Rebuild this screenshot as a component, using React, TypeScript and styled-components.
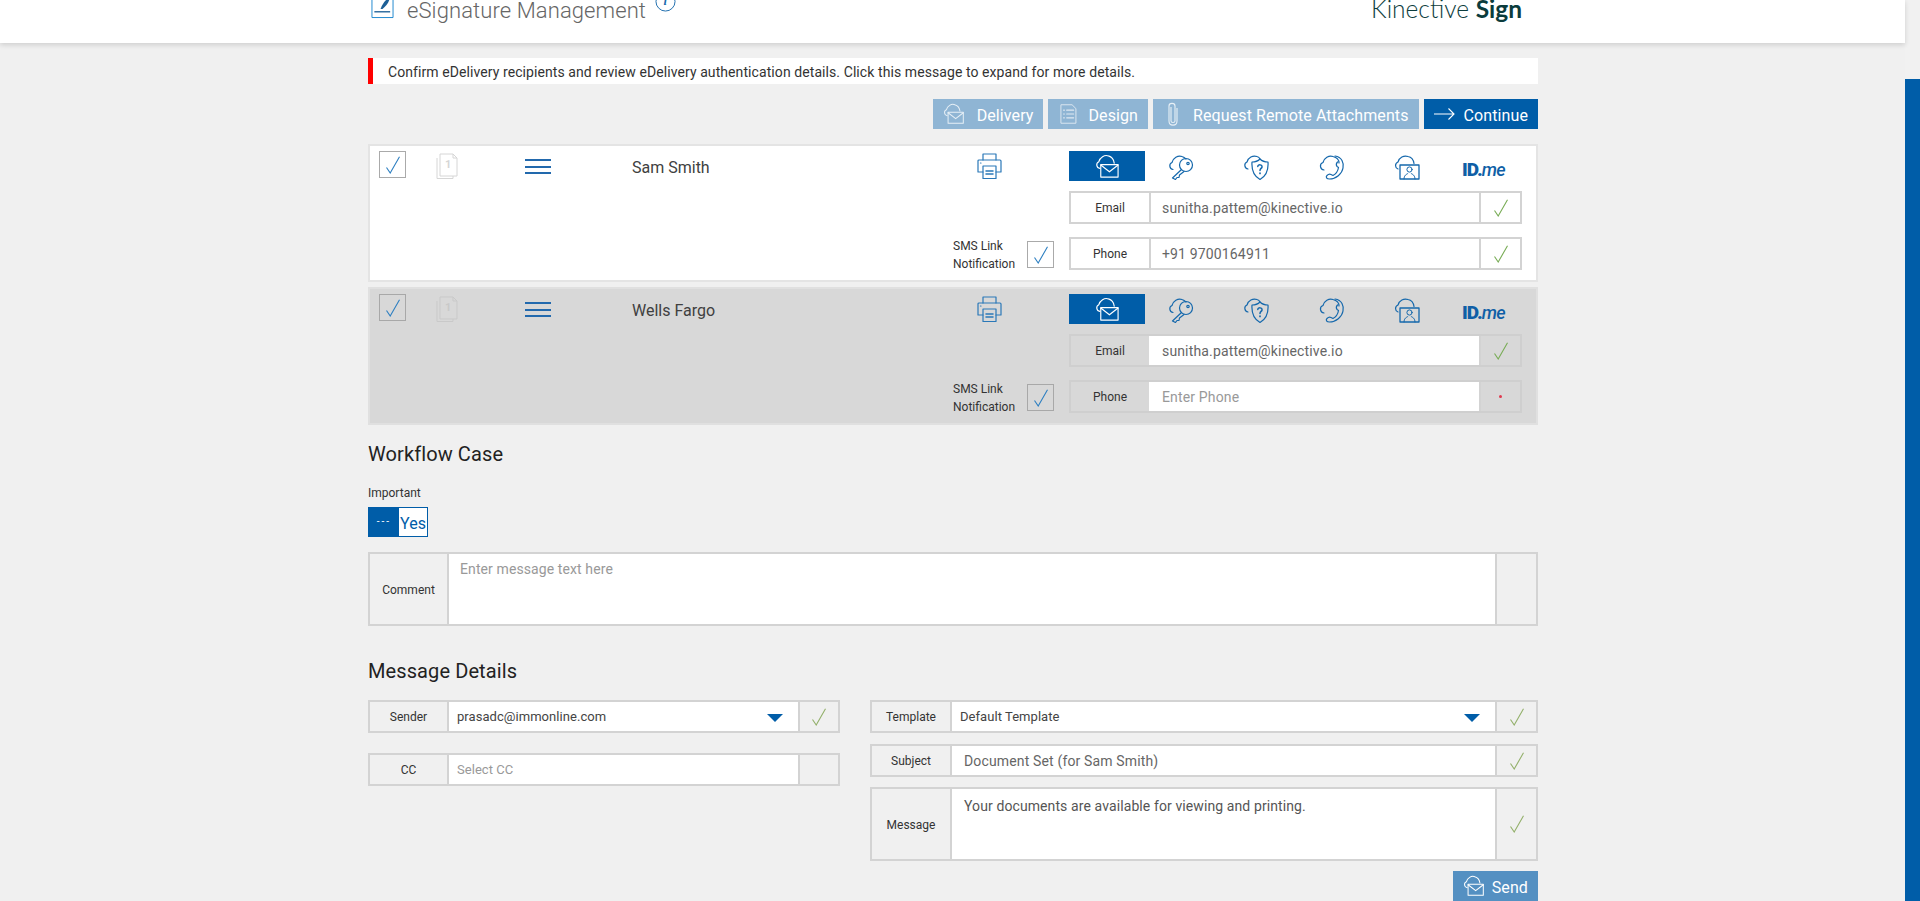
import React from "react";
import styled, { createGlobalStyle } from "styled-components";

const BLUE = "#005da8";

const Global = createGlobalStyle`
  html, body { margin: 0; padding: 0; height: 901px; overflow: hidden; background: #f0f0f0; }
  body { font-family: Roboto, "Liberation Sans", sans-serif; color: #333; }
  * { box-sizing: border-box; }
`;

const Shell = styled.div`display: flex; width: 1920px; height: 901px; overflow: hidden;`;
const Main = styled.div`width: 1905px; flex: none; display: flex; flex-direction: column;`;
const ScrollTrack = styled.div`width: 15px; flex: none; padding-top: 79px; background: #f1f1f1; display: flex;`;
const ScrollThumb = styled.div`flex: 1; background: ${BLUE};`;

const Header = styled.header`
  height: 43px; flex: none; background: #fff; box-shadow: 0 2px 5px rgba(0,0,0,.14);
  overflow: hidden; padding: 0 16px 17px 371px; display: flex; align-items: flex-end; position: relative; z-index: 1;
`;
const HeaderIcon = styled.svg`width: 23px; height: 24px; flex: none; margin-bottom: 7px; margin-right: 13px;`;
const Title = styled.h1`margin: 0; font-size: 22px; line-height: 30px; font-weight: 300; color: #666; letter-spacing: .1px;`;
const InfoIcon = styled.svg`width: 21px; height: 21px; flex: none; margin: 0 0 14px 9px;`;
const Logo = styled.div`
  margin-left: auto; font-family: Lato, sans-serif; font-size: 24.5px; line-height: 30px; color: #0b3c3c; font-weight: 300;
  padding-right: 367px; margin-bottom: 2px;
  b { font-weight: 700; }
`;

const Page = styled.main`width: 1170px; margin-left: 368px; padding-top: 15px;`;

const Alert = styled.div`
  height: 26px; background: #fff; border-left: 5px solid #f00; padding-left: 15px;
  font-size: 14px; line-height: 28px; color: #333; letter-spacing: .08px;
`;
const Toolbar = styled.div`display: flex; justify-content: flex-end; gap: 5px; margin: 15px 0;`;
const ActionBtn = styled.button<{ $tone?: "muted" | "solid" | "mid"; $gap?: number; $left?: number }>`
  height: 30px; border: 0; padding: 0 10px 0 ${(p) => p.$left ?? 10}px; display: inline-flex; align-items: center; gap: ${(p) => p.$gap ?? 12}px;
  font: 400 16px/30px Roboto, sans-serif; color: #fff; letter-spacing: .1px;
  background: ${(p) => (p.$tone === "solid" ? BLUE : p.$tone === "mid" ? "#5490c2" : "#8fb5d4")};
  svg { flex: none; }
`;
const BtnText = styled.span`padding-top: 4px;`;

const Card = styled.section<{ $muted?: boolean }>`
  height: 138px; border: 2px solid ${(p) => (p.$muted ? "#e0e0e0" : "#e4e4e4")};
  background: ${(p) => (p.$muted ? "#d8d8d8" : "#fff")};
  padding: 5px 14px 0 9px; display: flex; margin-bottom: 5px;
`;
const CheckBox = styled.div<{ $muted?: boolean }>`
  width: 27px; height: 27px; border: 1px solid ${(p) => (p.$muted ? "#a8a8a8" : "#aaa")}; flex: none;
  display: flex; align-items: center; justify-content: center; color: #2d7fc1;
`;
const DocSlot = styled.div`width: 22px; margin: 2px 67px 0 30px; flex: none;`;
const Burger = styled.div`
  width: 26px; height: 15px; margin: 8px 81px 0 0; flex: none; border-top: 2px solid #2269ad; border-bottom: 2px solid #2269ad; position: relative;
  &::after { content: ""; position: absolute; left: 0; right: 0; top: 4.5px; height: 2px; background: #2269ad; }
`;
const Name = styled.div`font-size: 16px; line-height: 20px; margin-top: 7px; color: #404040; flex: 1;`;
const Right = styled.div`
  width: 569px; flex: none; display: grid; grid-template-columns: 116px 1fr; grid-template-rows: 30px 43px 46px;
`;
const PrinterSlot = styled.div`padding: 2px 0 0 23px;`;
const Tabs = styled.div`display: flex; height: 30px;`;
const Tab = styled.div<{ $active?: boolean }>`
  width: 76px; flex: none; height: 30px; display: flex; align-items: center; justify-content: center;
  background: ${(p) => (p.$active ? BLUE : "transparent")};
  padding: ${(p) => (p.$active ? "0" : "2px 4px 0 0")};
  margin-right: -.4px;
`;
const IdMe = styled.div`
  font-size: 19px; font-weight: 900; color: #0f5fa6; letter-spacing: -1px; line-height: 30px; padding: 4px 0 0 15px;
  i { font-weight: 500; font-size: 18px; letter-spacing: -.7px; }
`;
const SpacerCell = styled.div``;
const SmsCell = styled.div`height: 33px; align-self: end; display: flex; align-items: center; justify-content: space-between; padding: 2px 15px 0 0;`;
const SmsText = styled.div`font-size: 12px; line-height: 18px; color: #333;`;

const LINE = "#d3d3d3";

const Field = styled.div<{ $muted?: boolean; $page?: boolean }>`
  display: flex; height: 33px; align-self: end; border: 2px solid ${(p) => (p.$muted ? "#cfcfcf" : LINE)};
  background: ${(p) => (p.$muted ? "#d8d8d8" : p.$page ? "#f0f0f0" : "#fff")};
`;
const FieldLabel = styled.div<{ $width?: number }>`
  width: ${(p) => p.$width ?? 78}px; flex: none; display: flex; align-items: center; justify-content: center;
  font-size: 12px; color: #333; padding-top: 1px;
`;
const FieldValue = styled.div<{ $placeholder?: boolean; $size?: number; $pad?: number; $dark?: boolean; $muted?: boolean }>`
  flex: 1; min-width: 0; background: #fff; border-left: 2px solid ${(p) => (p.$muted ? "#fff" : LINE)};
  padding: 0 10px 0 ${(p) => p.$pad ?? 11}px; display: flex; align-items: center; justify-content: space-between;
  font-size: ${(p) => p.$size ?? 14}px; color: ${(p) => (p.$placeholder ? "#999" : p.$dark ? "#444" : "#666")};
  line-height: 1; letter-spacing: ${(p) => (p.$size ? ".05px" : ".15px")};
`;
const FieldSide = styled.div<{ $width?: number; $soft?: boolean }>`
  width: ${(p) => p.$width ?? 41}px; flex: none; border-left: 2px solid ${LINE}; display: flex; align-items: center; justify-content: center;
  color: ${(p) => (p.$soft ? "#93b06b" : "#78ac55")};
`;
const RedDot = styled.span`width: 3px; height: 3px; border-radius: 50%; background: #e0394f;`;

const Heading = styled.h2<{ $top: number }>`
  margin: ${(p) => p.$top}px 0 0; font-size: 20px; line-height: 24px; font-weight: 400; color: #222; letter-spacing: .1px;
`;
const SmallLabel = styled.div`font-size: 12px; line-height: 16px; color: #333; margin-top: 19px;`;
const Toggle = styled.div`display: flex; width: 60px; height: 30px; border: 1px solid ${BLUE}; margin: 6px 0 15px; background: #fff;`;
const ToggleOn = styled.div`width: 30px; background: ${BLUE}; color: #fff; font-size: 10px; line-height: 28px; text-align: center; letter-spacing: 2px;`;
const ToggleOff = styled.div`flex: 1; color: ${BLUE}; font-size: 16px; line-height: 32px; text-align: center;`;

const TextBlock = styled.div<{ $h: number }>`
  display: flex; height: ${(p) => p.$h}px; border: 2px solid ${LINE}; background: #f0f0f0;
`;
const TextArea = styled.div<{ $placeholder?: boolean; $pad?: number }>`
  flex: 1; background: #fff; border-left: 2px solid ${LINE};
  padding: ${(p) => (p.$placeholder ? 5 : 7)}px 10px 0 ${(p) => p.$pad ?? 11}px;
  font-size: 14px; line-height: 20px; letter-spacing: .1px; color: ${(p) => (p.$placeholder ? "#999" : "#555")};
`;
const Columns = styled.div`display: flex; justify-content: space-between; margin-top: 17px;`;
const Col = styled.div<{ $width: number }>`width: ${(p) => p.$width}px; flex: none;`;
const Gap = styled.div<{ $h: number }>`height: ${(p) => p.$h}px;`;
const SendRow = styled.div`display: flex; justify-content: flex-end; margin-top: 10px;`;
const Arrow = styled.span`width: 0; height: 0; border-left: 8px solid transparent; border-right: 8px solid transparent; border-top: 8px solid ${BLUE}; margin: 2px 5px 0 0;`;

const Tick = ({ size = 18 }: { size?: number }) => (
  <svg width={size} height={size} viewBox="0 0 18 18" fill="none" stroke="currentColor" strokeWidth="1.1">
    <path d="M2.5 11.5 L6.2 17 L15.5 0.8" />
  </svg>
);

const Ico = ({ color = "#1568ac", w = 26, h = 26, children }: { color?: string; w?: number; h?: number; children: React.ReactNode }) => (
  <svg width={w} height={h} viewBox="0 0 26 26" fill="none" stroke={color} strokeWidth="1.2" strokeLinecap="round" strokeLinejoin="round">
    {children}
  </svg>
);
const MailIcon = ({ color, w = 25, h = 25 }: { color?: string; w?: number; h?: number }) => (
  <Ico color={color} w={w} h={h}>
    <path d="M5 15 C1.5 14.5 .5 9.5 4 8 C5 3.5 10 .5 14 2 C17.5 3 19.5 6 20 9.5" />
    <rect x="6" y="11" width="18" height="13" />
    <path d="M6 11.5 L15 18.5 L24 11.5" />
  </Ico>
);
const KeyIcon = () => (
  <Ico>
    <path d="M5 15.5 C1.5 15 .5 10 4 8.5 C5 4 10 1 14 2.5 C15.5 3 17 4 18 5" />
    <circle cx="18" cy="11" r="6.5" />
    <circle cx="20" cy="9.5" r="1.2" />
    <path d="M13.5 15.5 L4.5 24 L7.5 25.5 L9 23.5 L11 23.5 L11.5 21 L16 17.5" />
  </Ico>
);
const ShieldIcon = () => (
  <Ico>
    <path d="M5 15 C1.5 14.5 .5 9.5 4 8 C5 3.5 10 1 14 2.5 C15.5 3 16.5 4 17 5" />
    <path d="M9 8 C12 8 15 7 17 5 C19 7 22 8 25 8 C25.5 15 23.5 22 17 25.5 C10.5 22 8.5 15 9 8 Z" />
    <path d="M14.8 12.5 C15 10 19.5 10.5 19 13 C18.7 14.5 17 14.5 17 16.5" strokeWidth="1.5" />
    <path d="M17 19 L17 19.5" strokeWidth="1.7" />
  </Ico>
);
const PhoneIcon = () => (
  <Ico>
    <path d="M5 16 C1 15.5 0 10 4 8.5 C5 4 10 1 14 2.5 C18 3.5 20 6.5 20 9" />
    <path d="M16 2 C23 3 25 9 24 14 C23 20 17 25 10.5 25 C7.5 25 6.5 23 8 21.5 C9 20.5 11 20 12 20.5 L14 21.5 C17 20 19 16.5 19.5 13.5 L18 12.5 C17 11 17.5 9 18.5 8" />
  </Ico>
);
const ContactIcon = () => (
  <Ico>
    <path d="M4 15 C1 14 .5 9.5 4 8 C5 3.5 10 1 14 2.5 C17.5 3 19.5 6 20 9.5" />
    <rect x="6" y="11" width="19" height="14" strokeWidth="1.3" />
    <circle cx="15.5" cy="15.5" r="2.6" strokeWidth="1" />
    <path d="M10 25 C10 21 12.5 20.5 13.8 19.5 M21 25 C21 21 18.5 20.5 17.2 19.5" strokeWidth="1" />
  </Ico>
);
const PrinterIcon = () => (
  <Ico color="#2a78b8">
    <path d="M7 7 V1 H20 V7" />
    <path d="M7 19 H2 V8 C2 7.4 2.4 7 3 7 H24 C24.6 7 25 7.4 25 8 V19 H20" />
    <rect x="7" y="13" width="13" height="12.5" />
    <path d="M10 18 H17 M10 21 H17" strokeWidth="1.5" />
    <path d="M4.5 10 H5" />
  </Ico>
);
const DocIcon = ({ muted }: { muted?: boolean }) => {
  const c = muted ? "#c9c9c9" : "#d6d6d6";
  return (
    <svg width="22" height="26" viewBox="0 0 22 26" fill="none" stroke={c} strokeWidth="1">
      <path d="M1 5 V25.5 H17 V23" />
      <path d="M4 1 V23 H21 V5 L17 1 Z" />
      <path d="M17 1 V5 H21" />
      <text x="9" y="15" fontFamily="Roboto, sans-serif" fontSize="11" fontWeight="700" fill={c} stroke="none">1</text>
    </svg>
  );
};
const ListIcon = () => (
  <Ico color="#dfe9f2" w={20} h={26}>
    <path d="M3 1 H17 L22 6 V25 H3 Z" />
    <path d="M6 8 H7 M10 8 H19 M6 13 H7 M10 13 H19 M6 18 H7 M10 18 H19" strokeWidth="1.5" />
  </Ico>
);
const ClipIcon = () => (
  <svg width="10" height="24" viewBox="0 0 10 24" fill="none" stroke="#e8f0f6" strokeWidth="1.1">
    <path d="M3 5 V19 C3 21 7 21 7 19 V4 C7 .5 1 .5 1 4 V19 C1 24.5 9 24.5 9 19 V6" />
  </svg>
);
const ArrowIcon = () => (
  <svg width="21" height="14" viewBox="0 0 21 14" fill="none" stroke="#fff" strokeWidth="1.1">
    <path d="M0 7 H20 M14.5 1.5 L20 7 L14.5 12.5" />
  </svg>
);

const Recipient = ({ name, muted, phone }: { name: string; muted?: boolean; phone?: string }) => (
  <Card $muted={muted}>
    <CheckBox $muted={muted}><Tick /></CheckBox>
    <DocSlot><DocIcon muted={muted} /></DocSlot>
    <Burger />
    <Name>{name}</Name>
    <Right>
      <PrinterSlot><PrinterIcon /></PrinterSlot>
      <Tabs>
        <Tab $active><MailIcon color="#fff" /></Tab>
        <Tab><KeyIcon /></Tab>
        <Tab><ShieldIcon /></Tab>
        <Tab><PhoneIcon /></Tab>
        <Tab><ContactIcon /></Tab>
        <IdMe>ID.<i>me</i></IdMe>
      </Tabs>
      <SpacerCell />
      <Field $muted={muted}>
        <FieldLabel>Email</FieldLabel>
        <FieldValue $muted={muted}>sunitha.pattem@kinective.io</FieldValue>
        <FieldSide><Tick /></FieldSide>
      </Field>
      <SmsCell>
        <SmsText>SMS Link<br />Notification</SmsText>
        <CheckBox $muted={muted}><Tick /></CheckBox>
      </SmsCell>
      <Field $muted={muted}>
        <FieldLabel>Phone</FieldLabel>
        <FieldValue $muted={muted} $placeholder={!phone}>{phone ?? "Enter Phone"}</FieldValue>
        <FieldSide>{phone ? <Tick /> : <RedDot />}</FieldSide>
      </Field>
    </Right>
  </Card>
);

export default function App() {
  return (
    <Shell>
      <Global />
      <Main>
        <Header>
          <HeaderIcon viewBox="0 0 24 24" fill="none" stroke="#1c86cf" strokeWidth="1">
            <path d="M1 1 V23 H23 V1" />
            <path d="M10 14 C12 8 16 4 20 1 C19 7 16 11 12 14 Z" fill="#1c5f96" stroke="none" />
            <path d="M3.5 17 H20" stroke="#1c5f96" strokeWidth="1.4" />
          </HeaderIcon>
          <Title>eSignature Management</Title>
          <InfoIcon viewBox="0 0 22 22" fill="none" stroke="#1a6bac" strokeWidth="1">
            <circle cx="11" cy="11" r="10" />
            <text x="8.8" y="15" fontFamily="Liberation Serif, serif" fontStyle="italic" fontWeight="700" fontSize="13" fill="#1a6bac" stroke="none">i</text>
          </InfoIcon>
          <Logo>Kinective <b>Sign</b></Logo>
        </Header>
        <Page>
          <Alert>Confirm eDelivery recipients and review eDelivery authentication details. Click this message to expand for more details.</Alert>
          <Toolbar>
            <ActionBtn><MailIcon color="#e6eff6" w={22} h={22} /><BtnText>Delivery</BtnText></ActionBtn>
            <ActionBtn $left={11} $gap={9}><ListIcon /><BtnText>Design</BtnText></ActionBtn>
            <ActionBtn $left={15} $gap={15}><ClipIcon /><BtnText>Request Remote Attachments</BtnText></ActionBtn>
            <ActionBtn $tone="solid" $gap={9}><ArrowIcon /><BtnText>Continue</BtnText></ActionBtn>
          </Toolbar>
          <Recipient name="Sam Smith" phone="+91 9700164911" />
          <Recipient name="Wells Fargo" muted />
          <Heading $top={17}>Workflow Case</Heading>
          <SmallLabel>Important</SmallLabel>
          <Toggle>
            <ToggleOn>---</ToggleOn>
            <ToggleOff>Yes</ToggleOff>
          </Toggle>
          <TextBlock $h={74}>
            <FieldLabel $width={77}>Comment</FieldLabel>
            <TextArea $placeholder>Enter message text here</TextArea>
            <FieldSide />
          </TextBlock>
          <Heading $top={33}>Message Details</Heading>
          <Columns>
            <Col $width={472}>
              <Field $page>
                <FieldLabel $width={77}>Sender</FieldLabel>
                <FieldValue $size={13} $pad={8} $dark>prasadc@immonline.com<Arrow /></FieldValue>
                <FieldSide $width={40} $soft><Tick /></FieldSide>
              </Field>
              <Gap $h={20} />
              <Field $page>
                <FieldLabel $width={77}>CC</FieldLabel>
                <FieldValue $size={13} $pad={8} $placeholder>Select CC</FieldValue>
                <FieldSide $width={40} />
              </Field>
            </Col>
            <Col $width={668}>
              <Field $page>
                <FieldLabel $width={78}>Template</FieldLabel>
                <FieldValue $size={13} $pad={8} $dark>Default Template<Arrow /></FieldValue>
                <FieldSide $soft><Tick /></FieldSide>
              </Field>
              <Gap $h={11} />
              <Field $page>
                <FieldLabel $width={78}>Subject</FieldLabel>
                <FieldValue $pad={12}>Document Set (for Sam Smith)</FieldValue>
                <FieldSide $soft><Tick /></FieldSide>
              </Field>
              <Gap $h={10} />
              <TextBlock $h={74}>
                <FieldLabel $width={78}>Message</FieldLabel>
                <TextArea $pad={12}>Your documents are available for viewing and printing.</TextArea>
                <FieldSide $soft><Tick /></FieldSide>
              </TextBlock>
              <SendRow>
                <ActionBtn $tone="mid" $gap={7}><MailIcon color="#fff" w={22} h={22} /><BtnText>Send</BtnText></ActionBtn>
              </SendRow>
            </Col>
          </Columns>
        </Page>
      </Main>
      <ScrollTrack><ScrollThumb /></ScrollTrack>
    </Shell>
  );
}
